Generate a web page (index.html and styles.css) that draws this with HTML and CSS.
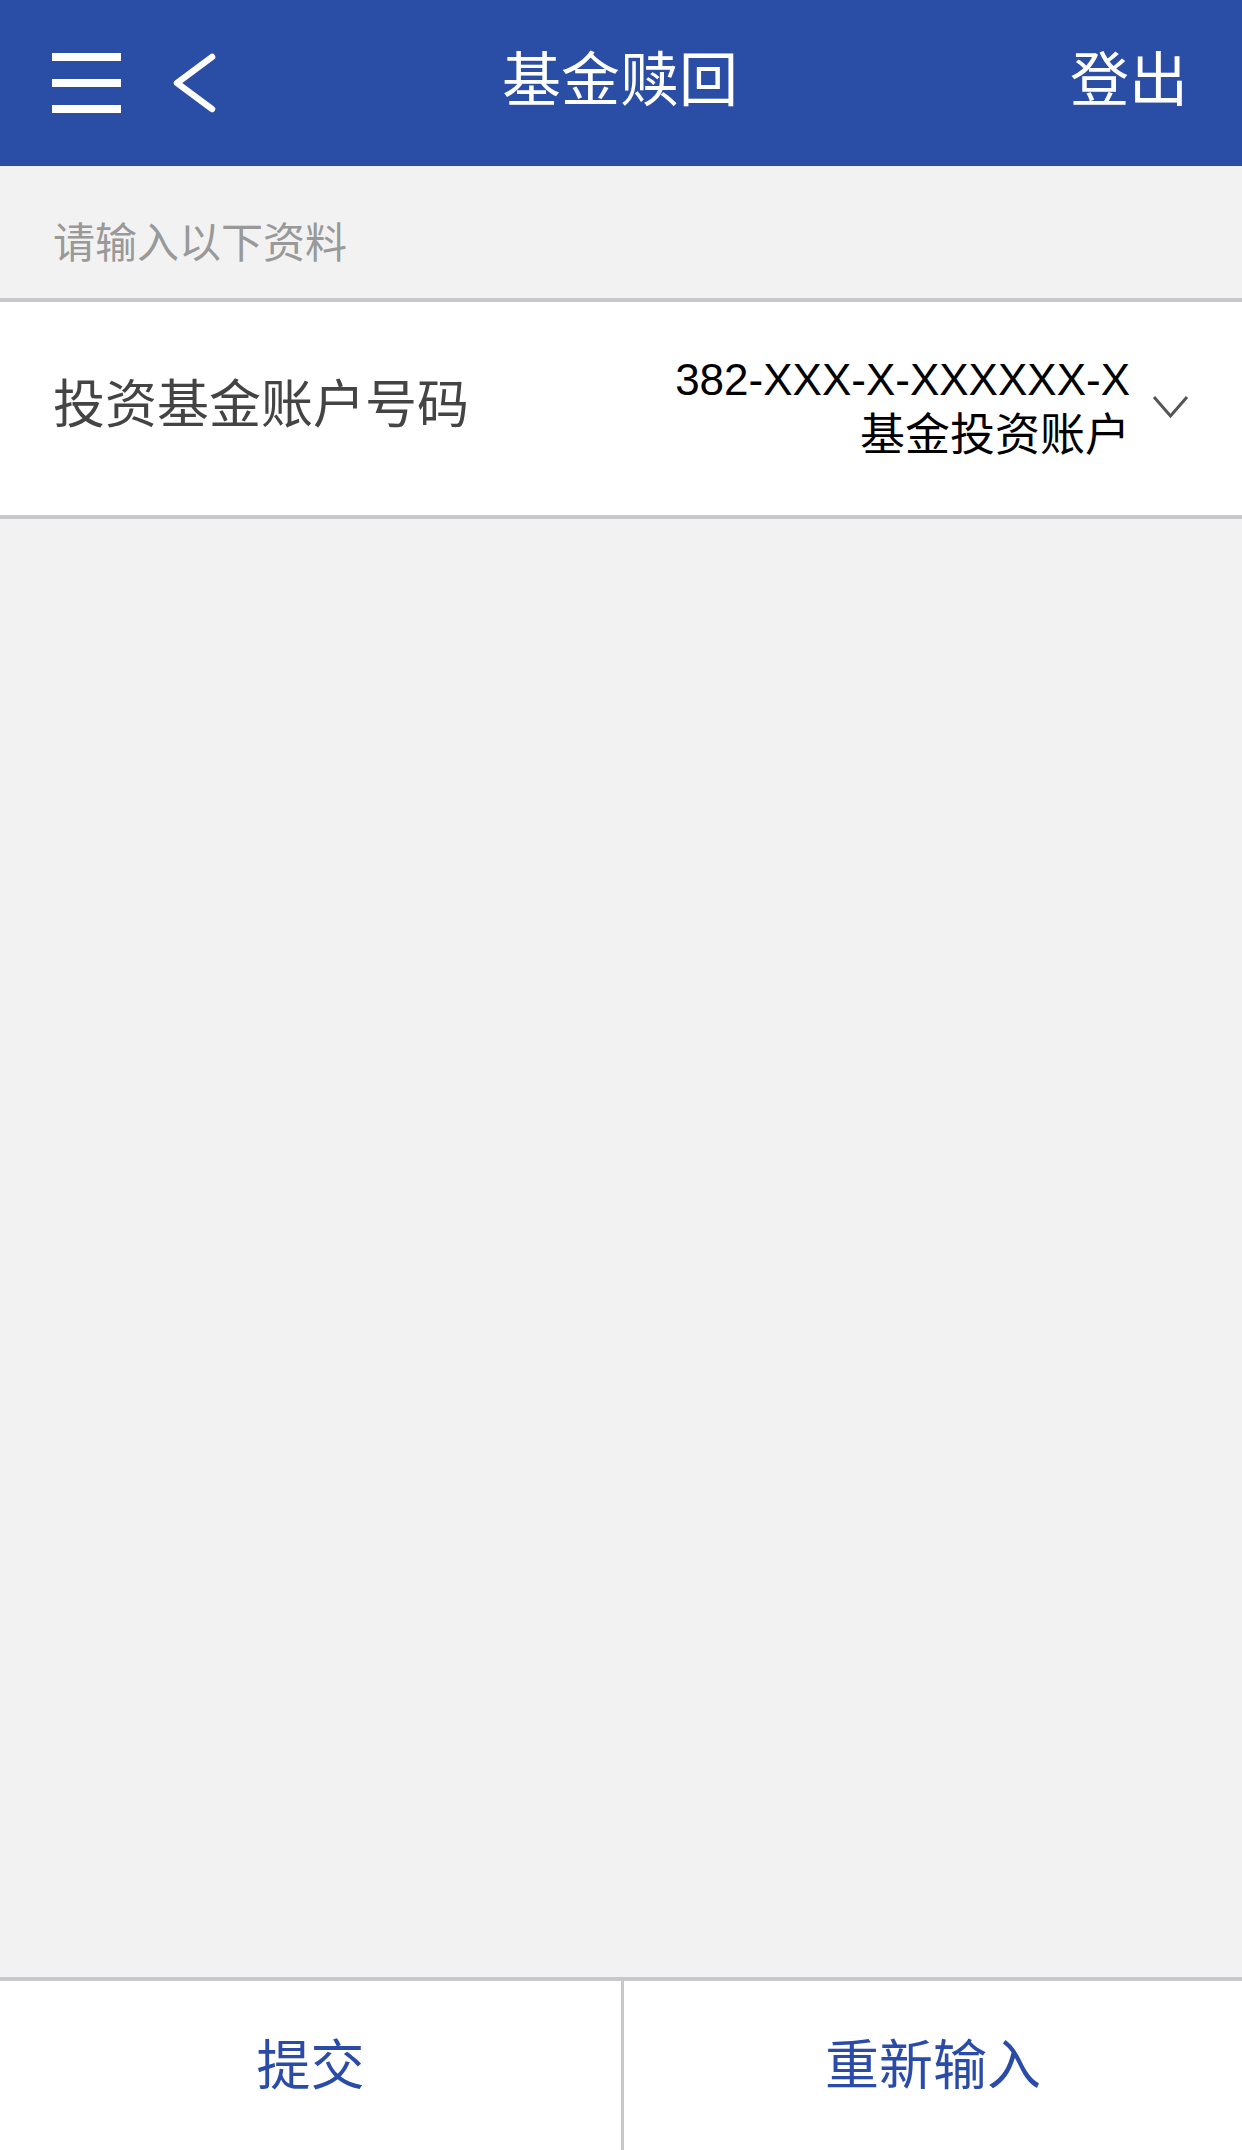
FILE: index.html
```html
<!DOCTYPE html>
<html lang="zh-CN">
<head>
<meta charset="utf-8">
<title>基金赎回</title>
<link rel="stylesheet" href="styles.css">
</head>
<body>
<div class="page">
  <header class="topbar">
    <div class="topbar-left">
      <svg class="icon-menu" width="69" height="60" viewBox="0 0 69 60" aria-hidden="true">
        <rect x="0" y="0" width="69" height="8" fill="#fff"/>
        <rect x="0" y="26" width="69" height="8" fill="#fff"/>
        <rect x="0" y="52" width="69" height="8" fill="#fff"/>
      </svg>
      <svg class="icon-back" width="44" height="60" viewBox="0 0 44 60" aria-hidden="true">
        <polyline points="40,4 5,30 40,56" fill="none" stroke="#fff" stroke-width="6.5" stroke-linecap="round" stroke-linejoin="round"/>
      </svg>
    </div>
    <h1 class="topbar-title">基金赎回</h1>
    <div class="topbar-right">登出</div>
  </header>

  <div class="section-label">请输入以下资料</div>

  <div class="field-row">
    <div class="field-label">投资基金账户号码</div>
    <div class="field-value">
      <div class="value-text">
        <div class="value-number">382-XXX-X-XXXXXX-X</div>
        <div class="value-name">基金投资账户</div>
      </div>
      <svg class="icon-down" width="37" height="24" viewBox="0 0 37 24" aria-hidden="true">
        <polyline points="2,2 18.5,21 35,2" fill="none" stroke="#555" stroke-width="3"/>
      </svg>
    </div>
  </div>

  <main class="content"></main>

  <footer class="actions">
    <button class="action">提交</button>
    <button class="action">重新输入</button>
  </footer>
</div>
</body>
</html>
```

FILE: styles.css
```css
* { box-sizing: border-box; }

html, body {
  margin: 0;
  padding: 0;
}

body {
  background: #f2f2f2;
  font-family: "Noto Sans CJK SC", "Noto Sans", sans-serif;
}

.page {
  width: 1242px;
  height: 2150px;
  display: flex;
  flex-direction: column;
  background: #f2f2f2;
}

.topbar {
  height: 166px;
  flex: none;
  background: #2a4da5;
  display: grid;
  grid-template-columns: 1fr auto 1fr;
  align-items: center;
  padding: 0 54px 0 52px;
  color: #fff;
}

.topbar-left {
  display: flex;
  align-items: center;
  gap: 51px;
}

.icon-menu, .icon-back { display: block; }

.topbar-title {
  margin: 0 0 14px;
  font-weight: normal;
  font-size: 59px;
  line-height: 64px;
  text-align: center;
}

.topbar-right {
  margin-bottom: 14px;
  text-align: right;
  font-size: 59px;
  line-height: 64px;
}

.section-label {
  flex: none;
  height: 136px;
  padding: 53px 0 0 53px;
  font-size: 42px;
  line-height: 42px;
  color: #999;
  border-bottom: 4px solid #c8c8cc;
}

.field-row {
  flex: none;
  height: 217px;
  background: #fff;
  border-bottom: 4px solid #c8c8cc;
  display: flex;
  align-items: center;
  justify-content: space-between;
  padding: 0 53px 6px;
}

.field-label {
  font-size: 52px;
  line-height: 56px;
  color: #444;
  margin-bottom: 10px;
}

.field-value {
  display: flex;
  align-items: center;
  gap: 22px;
}

.value-text {
  text-align: right;
  color: #000;
}

.value-number {
  font-family: "Liberation Sans", Arial, sans-serif;
  font-size: 44px;
  line-height: 48px;
}

.value-name {
  margin-top: 4px;
  font-size: 45px;
  line-height: 48px;
}

.icon-down { display: block; margin-top: 2px; }

.content {
  flex: 1;
  background: #f2f2f2;
}

.actions {
  flex: none;
  height: 173px;
  border-top: 4px solid #c8c8cc;
  background: #fff;
  display: grid;
  grid-template-columns: 1fr 1fr;
}

.action {
  border: none;
  background: #fff;
  margin: 0;
  padding: 0 0 8px;
  font-family: "Noto Sans CJK SC", "Noto Sans", sans-serif;
  font-size: 54px;
  line-height: 60px;
  color: #2a4ba8;
}

.action + .action {
  border-left: 3px solid #c8c8c8;
}
```
